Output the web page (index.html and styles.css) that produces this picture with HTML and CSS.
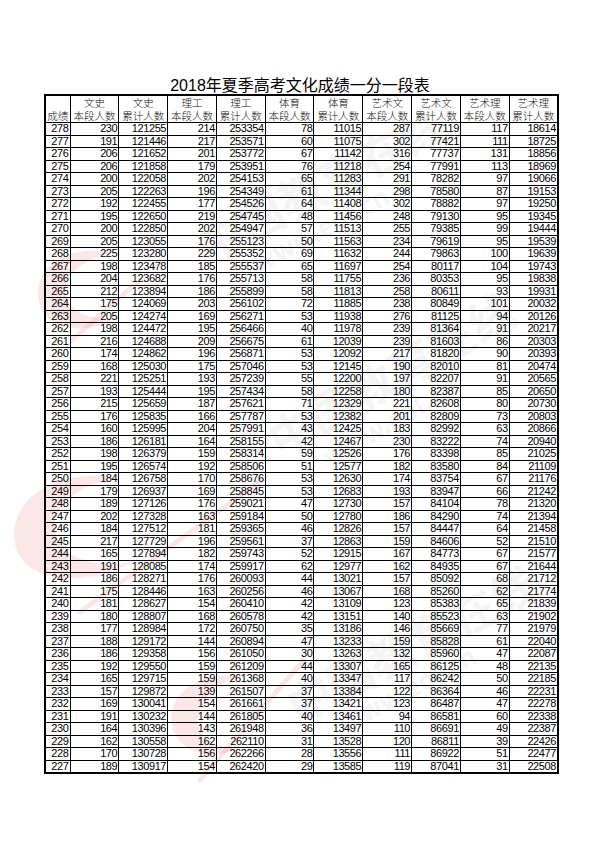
FILE: index.html
```html
<!DOCTYPE html>
<html lang="zh-CN">
<head>
<meta charset="utf-8">
<title>2018年夏季高考文化成绩一分一段表</title>
<link rel="stylesheet" href="styles.css">
</head>
<body>
<svg class="watermark" width="600" height="848" viewBox="0 0 600 848" aria-hidden="true">
  <g class="wm-logo">
    <path d="M112 252 C60 244 30 272 40 305 C48 330 85 336 118 318 C84 322 62 306 66 286 C70 268 92 258 112 252 Z"/>
    <path d="M118 478 C50 466 4 505 16 548 C26 580 80 590 132 562 C84 572 48 548 56 518 C64 494 92 482 118 478 Z"/>
    <path d="M236 676 C196 672 166 696 172 726 C178 752 210 762 240 748 C212 750 194 734 198 714 C202 696 220 684 236 676 Z"/>
  </g>
  <g class="wm-line">
    <line x1="72" y1="340" x2="140" y2="280"/>
    <line x1="80" y1="612" x2="262" y2="480"/>
    <line x1="200" y1="780" x2="304" y2="660"/>
  </g>
  <g class="wm-text">
    <text class="wm-big" x="330" y="200" transform="rotate(-28 330 200)">中国教育在线</text>
    <text class="wm-small" x="325" y="238" transform="rotate(-28 325 238)">www.eol.cn</text>
    <text class="wm-big" x="400" y="390" transform="rotate(-30 400 390)">中国教育在线</text>
    <text class="wm-small" x="395" y="430" transform="rotate(-30 395 430)">www.eol.cn</text>
    <text class="wm-big" x="420" y="660" transform="rotate(-28 420 660)">中国教育在线</text>
    <text class="wm-small" x="412" y="698" transform="rotate(-28 412 698)">www.eol.cn</text>
  </g>
</svg>
<main class="page">
  <h1 class="title">2018年夏季高考文化成绩一分一段表</h1>
  <table class="score-table">
    <colgroup>
      <col class="c-score">
      <col class="c-data"><col class="c-data"><col class="c-data"><col class="c-data"><col class="c-data">
      <col class="c-data"><col class="c-data"><col class="c-data"><col class="c-data"><col class="c-data">
    </colgroup>
    <thead>
      <tr>
        <th><span class="hl">成绩</span></th>
        <th><span class="hl">文史</span><span class="hl">本段人数</span></th>
        <th><span class="hl">文史</span><span class="hl">累计人数</span></th>
        <th><span class="hl">理工</span><span class="hl">本段人数</span></th>
        <th><span class="hl">理工</span><span class="hl">累计人数</span></th>
        <th><span class="hl">体育</span><span class="hl">本段人数</span></th>
        <th><span class="hl">体育</span><span class="hl">累计人数</span></th>
        <th><span class="hl">艺术文</span><span class="hl">本段人数</span></th>
        <th><span class="hl">艺术文</span><span class="hl">累计人数</span></th>
        <th><span class="hl">艺术理</span><span class="hl">本段人数</span></th>
        <th><span class="hl">艺术理</span><span class="hl">累计人数</span></th>
      </tr>
    </thead>
    <tbody>
      <tr><td>278</td><td>230</td><td>121255</td><td>214</td><td>253354</td><td>78</td><td>11015</td><td>287</td><td>77119</td><td>117</td><td>18614</td></tr>
      <tr><td>277</td><td>191</td><td>121446</td><td>217</td><td>253571</td><td>60</td><td>11075</td><td>302</td><td>77421</td><td>111</td><td>18725</td></tr>
      <tr><td>276</td><td>206</td><td>121652</td><td>201</td><td>253772</td><td>67</td><td>11142</td><td>316</td><td>77737</td><td>131</td><td>18856</td></tr>
      <tr><td>275</td><td>206</td><td>121858</td><td>179</td><td>253951</td><td>76</td><td>11218</td><td>254</td><td>77991</td><td>113</td><td>18969</td></tr>
      <tr><td>274</td><td>200</td><td>122058</td><td>202</td><td>254153</td><td>65</td><td>11283</td><td>291</td><td>78282</td><td>97</td><td>19066</td></tr>
      <tr><td>273</td><td>205</td><td>122263</td><td>196</td><td>254349</td><td>61</td><td>11344</td><td>298</td><td>78580</td><td>87</td><td>19153</td></tr>
      <tr><td>272</td><td>192</td><td>122455</td><td>177</td><td>254526</td><td>64</td><td>11408</td><td>302</td><td>78882</td><td>97</td><td>19250</td></tr>
      <tr><td>271</td><td>195</td><td>122650</td><td>219</td><td>254745</td><td>48</td><td>11456</td><td>248</td><td>79130</td><td>95</td><td>19345</td></tr>
      <tr><td>270</td><td>200</td><td>122850</td><td>202</td><td>254947</td><td>57</td><td>11513</td><td>255</td><td>79385</td><td>99</td><td>19444</td></tr>
      <tr><td>269</td><td>205</td><td>123055</td><td>176</td><td>255123</td><td>50</td><td>11563</td><td>234</td><td>79619</td><td>95</td><td>19539</td></tr>
      <tr><td>268</td><td>225</td><td>123280</td><td>229</td><td>255352</td><td>69</td><td>11632</td><td>244</td><td>79863</td><td>100</td><td>19639</td></tr>
      <tr><td>267</td><td>198</td><td>123478</td><td>185</td><td>255537</td><td>65</td><td>11697</td><td>254</td><td>80117</td><td>104</td><td>19743</td></tr>
      <tr><td>266</td><td>204</td><td>123682</td><td>176</td><td>255713</td><td>58</td><td>11755</td><td>236</td><td>80353</td><td>95</td><td>19838</td></tr>
      <tr><td>265</td><td>212</td><td>123894</td><td>186</td><td>255899</td><td>58</td><td>11813</td><td>258</td><td>80611</td><td>93</td><td>19931</td></tr>
      <tr><td>264</td><td>175</td><td>124069</td><td>203</td><td>256102</td><td>72</td><td>11885</td><td>238</td><td>80849</td><td>101</td><td>20032</td></tr>
      <tr><td>263</td><td>205</td><td>124274</td><td>169</td><td>256271</td><td>53</td><td>11938</td><td>276</td><td>81125</td><td>94</td><td>20126</td></tr>
      <tr><td>262</td><td>198</td><td>124472</td><td>195</td><td>256466</td><td>40</td><td>11978</td><td>239</td><td>81364</td><td>91</td><td>20217</td></tr>
      <tr><td>261</td><td>216</td><td>124688</td><td>209</td><td>256675</td><td>61</td><td>12039</td><td>239</td><td>81603</td><td>86</td><td>20303</td></tr>
      <tr><td>260</td><td>174</td><td>124862</td><td>196</td><td>256871</td><td>53</td><td>12092</td><td>217</td><td>81820</td><td>90</td><td>20393</td></tr>
      <tr><td>259</td><td>168</td><td>125030</td><td>175</td><td>257046</td><td>53</td><td>12145</td><td>190</td><td>82010</td><td>81</td><td>20474</td></tr>
      <tr><td>258</td><td>221</td><td>125251</td><td>193</td><td>257239</td><td>55</td><td>12200</td><td>197</td><td>82207</td><td>91</td><td>20565</td></tr>
      <tr><td>257</td><td>193</td><td>125444</td><td>195</td><td>257434</td><td>58</td><td>12258</td><td>180</td><td>82387</td><td>85</td><td>20650</td></tr>
      <tr><td>256</td><td>215</td><td>125659</td><td>187</td><td>257621</td><td>71</td><td>12329</td><td>221</td><td>82608</td><td>80</td><td>20730</td></tr>
      <tr><td>255</td><td>176</td><td>125835</td><td>166</td><td>257787</td><td>53</td><td>12382</td><td>201</td><td>82809</td><td>73</td><td>20803</td></tr>
      <tr><td>254</td><td>160</td><td>125995</td><td>204</td><td>257991</td><td>43</td><td>12425</td><td>183</td><td>82992</td><td>63</td><td>20866</td></tr>
      <tr><td>253</td><td>186</td><td>126181</td><td>164</td><td>258155</td><td>42</td><td>12467</td><td>230</td><td>83222</td><td>74</td><td>20940</td></tr>
      <tr><td>252</td><td>198</td><td>126379</td><td>159</td><td>258314</td><td>59</td><td>12526</td><td>176</td><td>83398</td><td>85</td><td>21025</td></tr>
      <tr><td>251</td><td>195</td><td>126574</td><td>192</td><td>258506</td><td>51</td><td>12577</td><td>182</td><td>83580</td><td>84</td><td>21109</td></tr>
      <tr><td>250</td><td>184</td><td>126758</td><td>170</td><td>258676</td><td>53</td><td>12630</td><td>174</td><td>83754</td><td>67</td><td>21176</td></tr>
      <tr><td>249</td><td>179</td><td>126937</td><td>169</td><td>258845</td><td>53</td><td>12683</td><td>193</td><td>83947</td><td>66</td><td>21242</td></tr>
      <tr><td>248</td><td>189</td><td>127126</td><td>176</td><td>259021</td><td>47</td><td>12730</td><td>157</td><td>84104</td><td>78</td><td>21320</td></tr>
      <tr><td>247</td><td>202</td><td>127328</td><td>163</td><td>259184</td><td>50</td><td>12780</td><td>186</td><td>84290</td><td>74</td><td>21394</td></tr>
      <tr><td>246</td><td>184</td><td>127512</td><td>181</td><td>259365</td><td>46</td><td>12826</td><td>157</td><td>84447</td><td>64</td><td>21458</td></tr>
      <tr><td>245</td><td>217</td><td>127729</td><td>196</td><td>259561</td><td>37</td><td>12863</td><td>159</td><td>84606</td><td>52</td><td>21510</td></tr>
      <tr><td>244</td><td>165</td><td>127894</td><td>182</td><td>259743</td><td>52</td><td>12915</td><td>167</td><td>84773</td><td>67</td><td>21577</td></tr>
      <tr><td>243</td><td>191</td><td>128085</td><td>174</td><td>259917</td><td>62</td><td>12977</td><td>162</td><td>84935</td><td>67</td><td>21644</td></tr>
      <tr><td>242</td><td>186</td><td>128271</td><td>176</td><td>260093</td><td>44</td><td>13021</td><td>157</td><td>85092</td><td>68</td><td>21712</td></tr>
      <tr><td>241</td><td>175</td><td>128446</td><td>163</td><td>260256</td><td>46</td><td>13067</td><td>168</td><td>85260</td><td>62</td><td>21774</td></tr>
      <tr><td>240</td><td>181</td><td>128627</td><td>154</td><td>260410</td><td>42</td><td>13109</td><td>123</td><td>85383</td><td>65</td><td>21839</td></tr>
      <tr><td>239</td><td>180</td><td>128807</td><td>168</td><td>260578</td><td>42</td><td>13151</td><td>140</td><td>85523</td><td>63</td><td>21902</td></tr>
      <tr><td>238</td><td>177</td><td>128984</td><td>172</td><td>260750</td><td>35</td><td>13186</td><td>146</td><td>85669</td><td>77</td><td>21979</td></tr>
      <tr><td>237</td><td>188</td><td>129172</td><td>144</td><td>260894</td><td>47</td><td>13233</td><td>159</td><td>85828</td><td>61</td><td>22040</td></tr>
      <tr><td>236</td><td>186</td><td>129358</td><td>156</td><td>261050</td><td>30</td><td>13263</td><td>132</td><td>85960</td><td>47</td><td>22087</td></tr>
      <tr><td>235</td><td>192</td><td>129550</td><td>159</td><td>261209</td><td>44</td><td>13307</td><td>165</td><td>86125</td><td>48</td><td>22135</td></tr>
      <tr><td>234</td><td>165</td><td>129715</td><td>159</td><td>261368</td><td>40</td><td>13347</td><td>117</td><td>86242</td><td>50</td><td>22185</td></tr>
      <tr><td>233</td><td>157</td><td>129872</td><td>139</td><td>261507</td><td>37</td><td>13384</td><td>122</td><td>86364</td><td>46</td><td>22231</td></tr>
      <tr><td>232</td><td>169</td><td>130041</td><td>154</td><td>261661</td><td>37</td><td>13421</td><td>123</td><td>86487</td><td>47</td><td>22278</td></tr>
      <tr><td>231</td><td>191</td><td>130232</td><td>144</td><td>261805</td><td>40</td><td>13461</td><td>94</td><td>86581</td><td>60</td><td>22338</td></tr>
      <tr><td>230</td><td>164</td><td>130396</td><td>143</td><td>261948</td><td>36</td><td>13497</td><td>110</td><td>86691</td><td>49</td><td>22387</td></tr>
      <tr><td>229</td><td>162</td><td>130558</td><td>162</td><td>262110</td><td>31</td><td>13528</td><td>120</td><td>86811</td><td>39</td><td>22426</td></tr>
      <tr><td>228</td><td>170</td><td>130728</td><td>156</td><td>262266</td><td>28</td><td>13556</td><td>111</td><td>86922</td><td>51</td><td>22477</td></tr>
      <tr><td>227</td><td>189</td><td>130917</td><td>154</td><td>262420</td><td>29</td><td>13585</td><td>119</td><td>87041</td><td>31</td><td>22508</td></tr>
    </tbody>
  </table>
</main>
</body>
</html>
```
FILE: styles.css
```css
html {
  background: #ffffff;
}

body {
  margin: 0;
  width: 600px;
  height: 848px;
  position: relative;
  overflow: hidden;
  color: #000000;
  font-family: "Liberation Sans", Arial, "Noto Sans CJK SC", sans-serif;
}

.watermark {
  position: absolute;
  left: 0;
  top: 0;
  z-index: -1;
  pointer-events: none;
}

.wm-logo path {
  fill: #e8464b;
  opacity: 0.13;
}

.wm-line line {
  stroke: #e8464b;
  stroke-width: 5;
  stroke-linecap: round;
  opacity: 0.13;
}

.wm-text text {
  fill: #7a7a7a;
  opacity: 0.08;
  text-anchor: middle;
  font-family: "Noto Sans CJK SC", sans-serif;
  font-weight: 700;
}

.wm-big {
  font-size: 46px;
}

.wm-small {
  font-size: 26px;
}

.page {
  padding-top: 78px;
}

.title {
  margin: 0;
  height: 16px;
  line-height: 16px;
  font-size: 16px;
  font-weight: normal;
  text-align: center;
  font-family: "Liberation Sans", "Noto Sans CJK SC", sans-serif;
}

.score-table {
  margin-left: 44px;
  width: 513px;
  border-collapse: collapse;
  table-layout: fixed;
  border: 2px solid #000000;
}

.c-score {
  width: 25px;
}

.c-data {
  width: 48.8px;
}

.score-table th {
  border: 1px solid #000000;
  padding: 0;
  height: 26px;
  font-weight: 300;
  font-size: 10.5px;
  line-height: 12.5px;
  vertical-align: bottom;
  color: #111111;
  font-family: "Liberation Sans", "Noto Sans CJK SC", sans-serif;
  white-space: nowrap;
}

.hl {
  display: block;
  height: 12.5px;
  line-height: 12.5px;
}

.score-table td {
  border: 1px solid #000000;
  padding: 0 1px 0 0;
  height: 11.5px;
  font-size: 11px;
  line-height: 11px;
  text-align: right;
  letter-spacing: -0.4px;
  white-space: nowrap;
}
```
